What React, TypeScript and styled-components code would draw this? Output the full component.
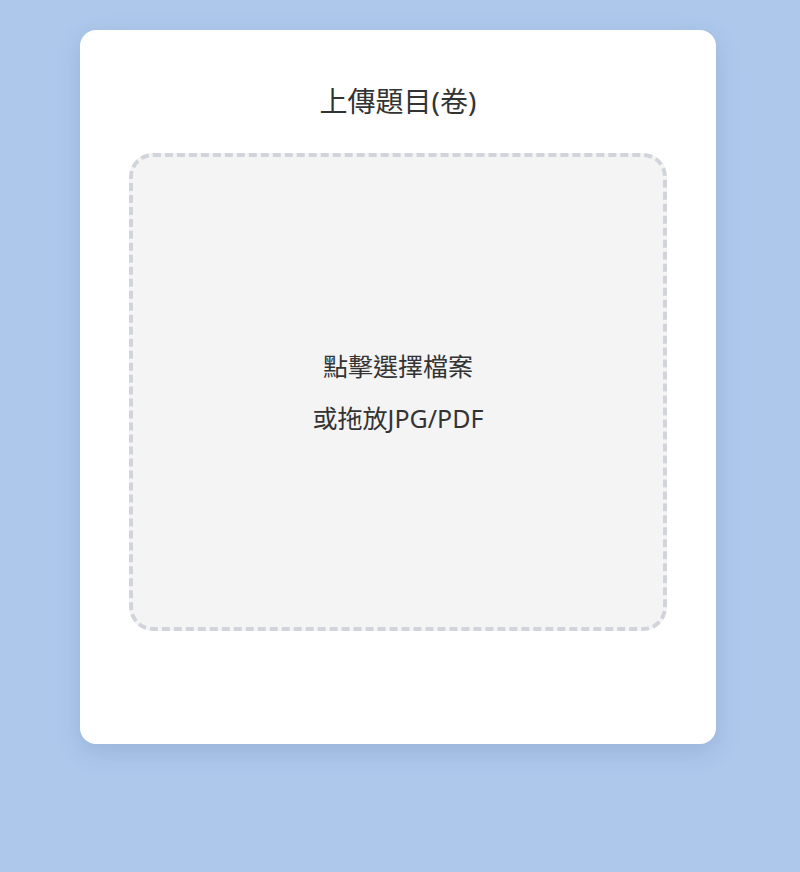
import styled, { createGlobalStyle } from "styled-components";

const GlobalStyle = createGlobalStyle`
  html, body {
    margin: 0;
    padding: 0;
    background: #adc8eb;
  }
  body {
    font-family: "Noto Sans", "Noto Sans CJK TC", sans-serif;
    color: #333333;
  }
`;

const Page = styled.div`
  min-height: 872px;
  padding: 30px 0 0 80px;
  box-sizing: border-box;
`;

const Card = styled.div`
  width: 636px;
  height: 714px;
  box-sizing: border-box;
  background: #ffffff;
  border-radius: 16px;
  box-shadow: 0 8px 24px rgba(60, 90, 140, 0.18);
  padding: 51px 49px 0;
  display: flex;
  flex-direction: column;
  align-items: center;
`;

const Title = styled.h2`
  margin: 0 0 32px;
  font-size: 28px;
  font-weight: 400;
  line-height: 40px;
  color: #333333;
`;

const DropZone = styled.div`
  width: 538px;
  height: 478px;
  box-sizing: border-box;
  border: 4px dashed #d1d5db;
  border-radius: 24px;
  background: #f4f4f4;
  display: flex;
  flex-direction: column;
  align-items: center;
  justify-content: center;
  gap: 16px;
  cursor: pointer;
`;

const Hint = styled.p`
  margin: 0;
  font-size: 25px;
  line-height: 36px;
  color: #333333;
`;

export default function App() {
  return (
    <>
      <GlobalStyle />
      <Page>
        <Card>
          <Title>上傳題目(卷)</Title>
          <DropZone>
            <Hint>點擊選擇檔案</Hint>
            <Hint>或拖放JPG/PDF</Hint>
          </DropZone>
        </Card>
      </Page>
    </>
  );
}
